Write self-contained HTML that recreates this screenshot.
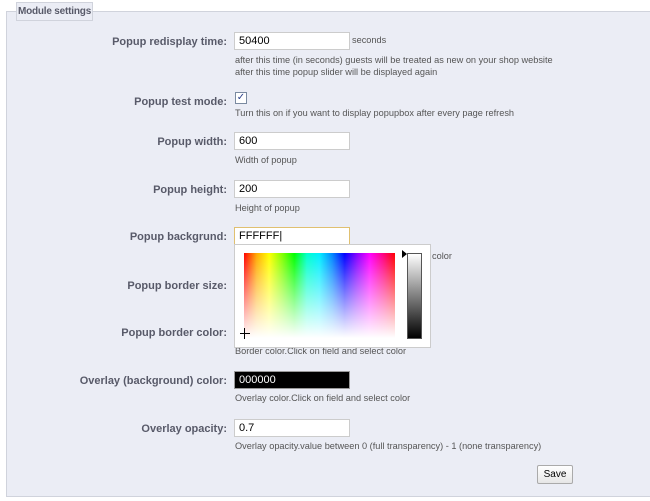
<!DOCTYPE html>
<html><head><style>
body{margin:0;width:650px;height:501px;background:#fff;font-family:"Liberation Sans",Arial,sans-serif;position:relative;overflow:hidden}
.fs{position:absolute;left:6px;top:11px;width:660px;height:484px;background:#ebedf5;border:1px solid #d0d3dc}
.lg{position:absolute;left:16px;top:2px;width:75px;height:17px;background:#ebedf5;border:1px solid #d0d3dc;font-size:10px;font-weight:bold;color:#585a69;line-height:17px;text-align:center;white-space:nowrap;letter-spacing:-0.2px}
.l{position:absolute;right:423px;font-size:11px;font-weight:bold;color:#585a69;white-space:nowrap}
.i{position:absolute;left:234px;width:112px;height:16px;background:#fff;border:1px solid #ccc;font-size:11px;line-height:16px;padding-left:4px;box-sizing:content-box;color:#000}
.h{position:absolute;left:235px;font-size:9.2px;color:#555;white-space:nowrap;line-height:12px}
</style></head><body>
<div class="fs"></div>
<div class="lg">Module settings</div>

<div class="l" style="top:36px">Popup redisplay time:</div>
<div class="i" style="top:32px;width:110px">50400</div>
<div class="h" style="left:352px;top:34px">seconds</div>
<div class="h" style="top:54px">after this time (in seconds) guests will be treated as new on your shop website<br>after this time popup slider will be displayed again</div>

<div class="l" style="top:96px">Popup test mode:</div>
<div style="position:absolute;left:235px;top:92px;width:10px;height:10px;border:1px solid #7a8aa0;background:#fff;font-size:10px;line-height:10px;color:#2a3f8a;text-align:center">✓</div>
<div class="h" style="top:107px">Turn this on if you want to display popupbox after every page refresh</div>

<div class="l" style="top:136px">Popup width:</div>
<div class="i" style="top:132px;width:110px">600</div>
<div class="h" style="top:154px">Width of popup</div>

<div class="l" style="top:184px">Popup height:</div>
<div class="i" style="top:180px;width:110px">200</div>
<div class="h" style="top:202px">Height of popup</div>

<div class="l" style="top:231px">Popup backgrund:</div>
<div class="i" style="top:227px;width:110px;border-color:#e0c070">FFFFFF|</div>
<div class="h" style="left:432px;top:250px">color</div>

<div class="l" style="top:280px">Popup border size:</div>
<div class="l" style="top:327px">Popup border color:</div>
<div class="h" style="top:345px">Border color.Click on field and select color</div>

<div style="position:absolute;left:234px;top:244px;width:195px;height:102px;background:#fff;border:1px solid #ccc"></div>
<div style="position:absolute;left:244px;top:253px;width:151px;height:85px;background:linear-gradient(to bottom,rgba(255,255,255,0),rgba(255,255,255,0.5) 50%,#fff),linear-gradient(to right,#f00,#fa0,#ff0,#8f0,#0f0,#0fc,#0ef,#08f,#00f,#80f,#f0f,#f08,#f00)"></div>
<div style="position:absolute;left:240px;top:333px;width:10px;height:1px;background:#000"></div>
<div style="position:absolute;left:244px;top:328px;width:1px;height:11px;background:#000"></div>
<div style="position:absolute;left:407px;top:253px;width:13px;height:84px;border:1px solid #555;background:linear-gradient(#fff,#000)"></div>
<div style="position:absolute;left:402px;top:250px;width:0;height:0;border-left:5px solid #000;border-top:4px solid transparent;border-bottom:4px solid transparent"></div>

<div class="l" style="top:375px">Overlay (background) color:</div>
<div class="i" style="top:371px;width:110px;background:#000;color:#fff;border-color:#999">000000</div>
<div class="h" style="top:392px">Overlay color.Click on field and select color</div>

<div class="l" style="top:423px">Overlay opacity:</div>
<div class="i" style="top:419px;width:110px">0.7</div>
<div class="h" style="top:440px">Overlay opacity.value between 0 (full transparency) - 1 (none transparency)</div>

<div style="position:absolute;left:537px;top:465px;width:34px;height:17px;background:linear-gradient(#fff,#e6e6e6);border:1px solid #aaa;border-radius:2px;font-size:10px;line-height:17px;text-align:center;color:#000">Save</div>
</body></html>
